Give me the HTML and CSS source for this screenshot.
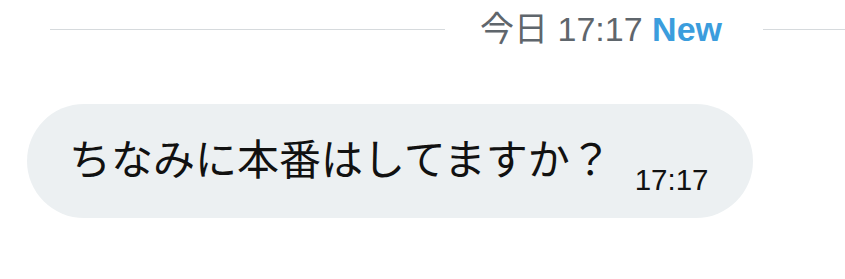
FILE: index.html
```html
<!DOCTYPE html>
<html lang="ja">

<head>
    <meta charset="UTF-8">
    <meta name="viewport" content="width=device-width, initial-scale=1.0">
    <title>Messages</title>
    <link rel="stylesheet" href="styles.css">
</head>

<body>
    <div class="thread">
        <div class="day-divider">
            <div class="rule rule-left"></div>
            <div class="day-label">今日 17:17 <span class="new">New</span></div>
            <div class="rule rule-right"></div>
        </div>

        <div class="message">
            <div class="bubble">
                <span class="bubble-text">ちなみに本番はしてますか？</span>
                <span class="bubble-time">17:17</span>
            </div>
        </div>
    </div>
</body>

</html>
```

FILE: styles.css
```css
* {
    font-family: "Liberation Sans", Helvetica, Arial, "Noto Sans CJK JP", sans-serif;
    margin: 0;
    padding: 0;
    box-sizing: border-box;
}

html,
body {
    width: 845px;
    height: 279px;
    background: #fff;
    overflow: hidden;
}

.thread {
    display: flex;
    flex-direction: column;
}

.day-divider {
    display: flex;
    align-items: center;
    height: 58px;
    padding-left: 50px;
}

.rule {
    height: 1px;
    background: #d6dadd;
}

.rule-left {
    flex: 1;
}

.rule-right {
    width: 82px;
}

.day-label {
    margin: 0 41px 0 35px;
    font-size: 34px;
    line-height: 1;
    color: #5f666c;
    white-space: nowrap;
}

.day-label .new {
    color: #3b9ddd;
    font-weight: 700;
}

.message {
    display: flex;
    margin-top: 46px;
    padding-left: 27px;
}

.bubble {
    display: flex;
    align-items: center;
    height: 114px;
    padding: 0 45px 0 42px;
    background: #ecf0f2;
    border-radius: 57px;
}

.bubble-text {
    font-size: 42px;
    line-height: 1;
    color: #111;
    white-space: nowrap;
}

.bubble-time {
    align-self: flex-end;
    margin: 0 0 24px 23px;
    font-size: 29.5px;
    line-height: 1;
    color: #111;
}
```
